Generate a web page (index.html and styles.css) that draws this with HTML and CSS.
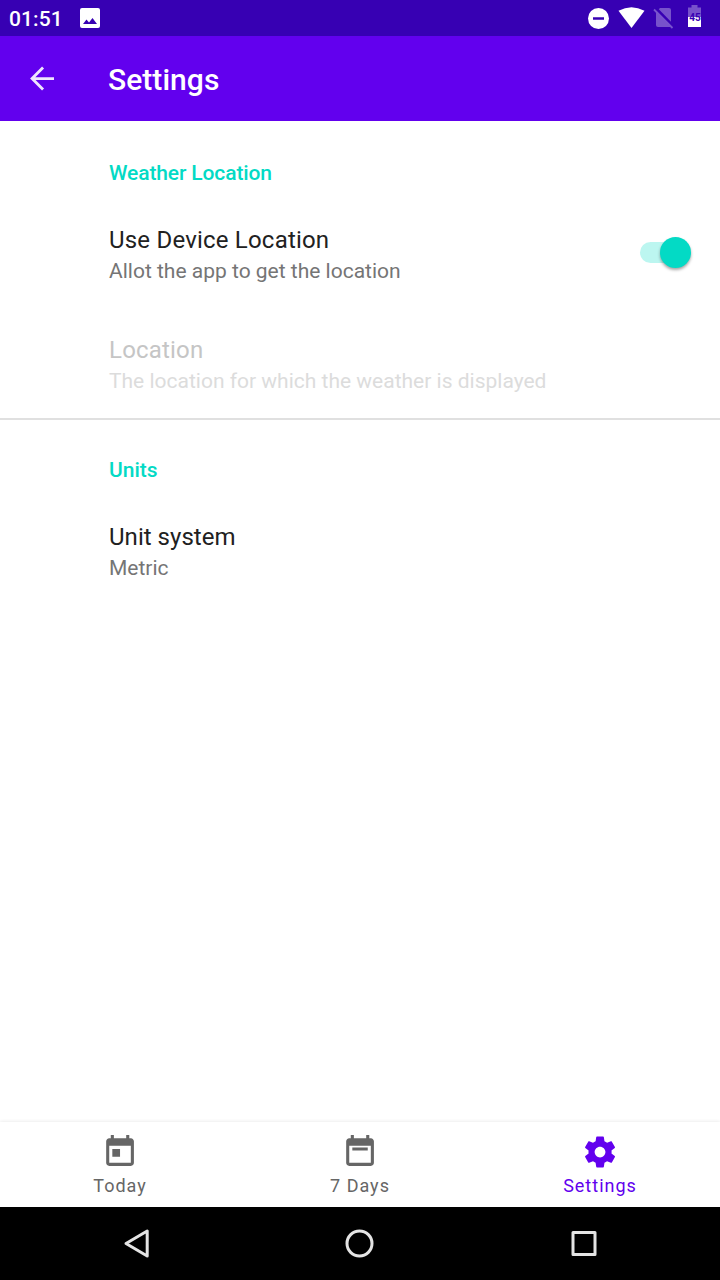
FILE: index.html
```html
<!DOCTYPE html>
<html lang="en">
<head>
<meta charset="utf-8">
<title>Settings</title>
<link rel="stylesheet" href="styles.css">
</head>
<body>
<div class="screen">
  <header class="status">
    <span class="clock">01:51</span>
    <svg class="photo" width="24" height="24" viewBox="0 0 24 24"><path fill="#fff" d="M22 20V4a2 2 0 0 0-2-2H4a2 2 0 0 0-2 2v16a2 2 0 0 0 2 2h16a2 2 0 0 0 2-2zM8.500 13.500l2.500 3.010L14.500 12l4.500 6H5z"/></svg>
    <svg class="indicators" width="120" height="36" viewBox="0 0 120 36">
      <circle cx="13.500" cy="18.500" r="10.500" fill="#fff"/>
      <path d="M8 18.500h11" stroke="#3700b3" stroke-width="2.500"/>
      <path d="M33.500 10.800Q46.500 3.500 59.500 10.800L46.500 28z" fill="#fff"/>
      <path d="M75 8h9q2 0 2 2v17H73q-2 0-2-2V12z" fill="#fff" fill-opacity=".32"/>
      <path d="M71 8.500L90 28" stroke="#3700b3" stroke-width="3"/>
      <path d="M69 9.500L87.500 28" stroke="#7954cd" stroke-width="1.800"/>
      <path d="M103 7.500h3.500V5h6v2.500h3.500V17h-13z" fill="#fff" fill-opacity=".32"/>
      <path d="M103 17h13v10h-13z" fill="#fff"/>
      <text class="battery" x="110" y="21">45</text>
    </svg>
  </header>
  <div class="appbar">
    <svg class="back" width="36" height="36" viewBox="0 0 24 24"><path fill="none" stroke="#fff" stroke-opacity=".9" stroke-width="1.900" d="M20 11.700H5M12.700 4.400L5.400 11.700l7.300 7.300"/></svg>
    <h1 class="title">Settings</h1>
  </div>
  <main class="content">
    <section class="group">
      <h2 class="category">Weather Location</h2>
      <div class="item">
        <div class="labels">
          <div class="name">Use Device Location</div>
          <div class="summary">Allot the app to get the location</div>
        </div>
        <div class="switch"><div class="thumb"></div></div>
      </div>
      <div class="item disabled">
        <div class="labels">
          <div class="name">Location</div>
          <div class="summary">The location for which the weather is displayed</div>
        </div>
      </div>
    </section>
    <section class="group divided">
      <h2 class="category">Units</h2>
      <div class="item">
        <div class="labels">
          <div class="name">Unit system</div>
          <div class="summary">Metric</div>
        </div>
      </div>
    </section>
  </main>
  <nav class="tabs">
    <div class="tab">
      <svg width="37" height="37" viewBox="0.3 0.3 24 24"><path fill="currentColor" d="M19 3h-1V1h-2v2H8V1H6v2H5c-1.110 0-1.990.9-1.990 2L3 19c0 1.100.89 2 2 2h14c1.100 0 2-.9 2-2V5c0-1.100-.9-2-2-2zm0 16H5V8h14v11zM7 10h5v5H7z"/></svg>
      <span class="tab-label">Today</span>
    </div>
    <div class="tab">
      <svg width="37" height="37" viewBox="0.3 0.3 24 24"><path fill="currentColor" d="M19 3h-1V1h-2v2H8V1H6v2H5c-1.110 0-1.990.9-1.990 2L3 19c0 1.100.89 2 2 2h14c1.100 0 2-.9 2-2V5c0-1.100-.9-2-2-2zm0 16H5V8h14v11zM7 9h10v2H7z"/></svg>
      <span class="tab-label">7 Days</span>
    </div>
    <div class="tab active">
      <svg width="37" height="37" viewBox="0.3 0.3 24 24"><path fill="currentColor" d="M19.430 12.980c.04-.32.07-.64.07-.98s-.03-.66-.07-.98l2.110-1.650c.19-.15.24-.42.12-.64l-2-3.460c-.12-.22-.39-.3-.61-.22l-2.490 1c-.52-.4-1.080-.73-1.690-.98l-.38-2.650C14.460 2.180 14.250 2 14 2h-4c-.25 0-.46.18-.49.42l-.38 2.650c-.61.25-1.170.59-1.690.98l-2.490-1c-.23-.09-.49 0-.61.22l-2 3.460c-.13.22-.07.49.12.64l2.110 1.650c-.04.32-.07.65-.07.98s.03.66.07.98l-2.110 1.650c-.19.15-.24.42-.12.64l2 3.460c.12.22.39.3.61.22l2.490-1c.52.4 1.080.73 1.690.98l.38 2.650c.03.24.24.42.49.42h4c.25 0 .46-.18.49-.42l.38-2.650c.61-.25 1.170-.59 1.690-.98l2.490 1c.23.09.49 0 .61-.22l2-3.460c.12-.22.07-.49-.12-.64l-2.110-1.650zM12 15.500c-1.930 0-3.500-1.570-3.500-3.500s1.570-3.500 3.500-3.500 3.500 1.570 3.500 3.500-1.570 3.500-3.500 3.500z"/></svg>
      <span class="tab-label">Settings</span>
    </div>
  </nav>
  <footer class="system">
    <svg width="36" height="36" viewBox="0 0 36 36"><path d="M25.200 6v25L4 18.500z"/></svg>
    <svg width="36" height="36" viewBox="0 0 36 36"><circle cx="15.500" cy="18.500" r="12.500"/></svg>
    <svg width="36" height="36" viewBox="0 0 36 36"><rect x="7" y="7.500" width="22" height="22"/></svg>
  </footer>
</div>
</body>
</html>
```
FILE: styles.css
```css
* { box-sizing: border-box; }
body { margin: 0; background: #fff; font-family: Roboto, sans-serif; }
svg { display: block; flex: none; }
.screen { display: flex; flex-direction: column; width: 720px; height: 1280px; }
.status { display: flex; align-items: center; height: 36px; flex: none; padding: 0 15px 0 9px; background: #3700b3; }
.clock { width: 69px; color: #fff; font-size: 21px; font-weight: 500; line-height: 36px; letter-spacing: 0.1px; padding-top: 1px; }
.indicators { margin-left: auto; }
.battery { font-family: Roboto, sans-serif; font-size: 10px; font-weight: 700; fill: #3700b3; text-anchor: middle; }
.appbar { display: flex; align-items: center; height: 85px; flex: none; padding-left: 24px; background: #6200ee; }
.title { margin: 0 0 0 48px; padding-top: 2px; color: #fff; font-size: 30px; font-weight: 500; line-height: 36px; letter-spacing: 0.05px; }
.content { flex: 1; }
.divided { border-top: 2px solid #e0e0e0; }
.category { height: 81px; margin: 0; padding: 40px 0 0 109px; color: #03dac5; font-size: 21px; font-weight: 500; line-height: 25px; letter-spacing: -0.12px; }
.divided .category { height: 79px; padding-top: 38px; letter-spacing: 0; }
.item { display: flex; justify-content: space-between; height: 110px; padding: 24px 29px 0 109px; }
.item.disabled { height: 106px; }
.name { color: #212121; font-size: 24px; line-height: 28px; letter-spacing: 0.2px; }
.divided .name { letter-spacing: 0.03px; }
.summary { color: #757575; font-size: 21px; line-height: 34px; }
.disabled .name { color: #c5c5c5; }
.disabled .summary { color: #dcdcdc; }
.switch { display: flex; justify-content: flex-end; align-items: center; width: 51px; height: 21px; margin-top: 16px; border-radius: 11px; background: linear-gradient(90deg, #bcf6f0 40px, transparent 40px); }
.thumb { flex: none; width: 31px; height: 31px; border-radius: 50%; background: #03dac5; box-shadow: 0 2px 3px rgba(0, 0, 0, 0.35); }
.tabs { display: flex; height: 85px; flex: none; box-shadow: 0 -1px 3px rgba(0, 0, 0, 0.07); background: #fff; }
.tab { display: flex; flex: 1; flex-direction: column; align-items: center; padding-top: 12px; color: #666; }
.tab.active { color: #6200ee; }
.tab-label { margin-top: 4px; font-size: 18px; line-height: 22px; letter-spacing: 1px; }
.system { display: flex; justify-content: space-between; height: 73px; flex: none; padding: 18px 118px 0 122px; background: #000; }
.system svg { fill: none; stroke: #e4e4e4; stroke-width: 3; stroke-linejoin: round; }
```
